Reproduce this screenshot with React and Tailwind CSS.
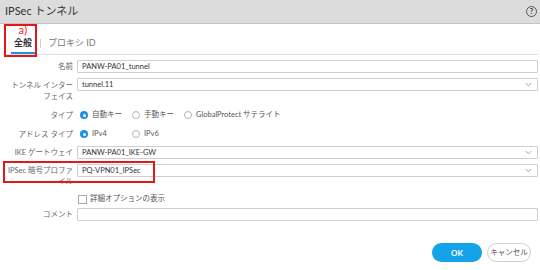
import React from "react";

const Chevron = () => (
  <svg width="7" height="5" viewBox="0 0 7 5" className="shrink-0">
    <path d="M0.8 1 L3.5 3.8 L6.2 1" fill="none" stroke="#9a9a9a" strokeWidth="0.9" />
  </svg>
);

const Radio = ({ on, label }) => (
  <div className="flex items-center w-[52px] shrink-0">
    {on ? (
      <span className="w-[8px] h-[8px] rounded-full bg-[#1e8fe6] flex items-center justify-center shrink-0">
        <span className="w-[3px] h-[3px] rounded-full bg-white" />
      </span>
    ) : (
      <span className="w-[8px] h-[8px] rounded-full border border-[#b5b5b5] bg-white shrink-0" />
    )}
    <span className="ml-[4px] whitespace-nowrap">{label}</span>
  </div>
);

const Label = ({ children }) => (
  <div className="w-[73px] shrink-0 text-right text-[7.5px] leading-[11px] text-[#666]">{children}</div>
);

const Input = ({ value, select }) => (
  <div className="ml-[4px] mr-[2px] flex-1 h-[13px] border border-[#cfcfcf] rounded-[1px] pl-[4px] pr-[5px] flex items-center justify-between text-[7.5px] text-[#333] bg-white">
    <span>{value}</span>
    {select ? <Chevron /> : null}
  </div>
);

export default function App() {
  return (
    <div className="w-[540px] h-[270px] bg-white relative overflow-hidden font-[Lato,'Noto_Sans_CJK_JP',sans-serif]">
      {/* header */}
      <div className="h-[24px] bg-[#dcdcdc] border-b border-[#c4c4c4] flex items-center justify-between pl-[5px] pr-[3px]">
        <span className="text-[11px] text-[#333]">IPSec トンネル</span>
        <span className="w-[11px] h-[11px] rounded-full border border-[#555] text-[7.5px] font-bold text-[#333] flex items-center justify-center leading-none">?</span>
      </div>

      {/* tabs */}
      <div className="h-[31px] mx-[2px] border-b border-[#dedede] flex items-end">
        <div className="ml-[9px] w-[24px] flex flex-col items-center border-b-2 border-[#1e8fe6] pb-[4px]">
          <span className="text-[11px] leading-[10px] tracking-[0.5px] text-[#ee2222]">a)</span>
          <span className="mt-[3px] text-[9px] leading-[10px] font-bold text-[#333]">全般</span>
        </div>
        <div className="ml-[5px] mb-[6px] w-px h-[9px] bg-[#d0d0d0]" />
        <span className="ml-[7px] mb-[6px] text-[9px] leading-[10px] text-[#777]">プロキシ ID</span>
      </div>

      {/* form */}
      <div className="flex flex-col">
        <div className="mt-[5px] flex items-center">
          <Label>名前</Label>
          <Input value="PANW-PA01_tunnel" />
        </div>
        <div className="mt-[5px] flex items-start">
          <div className="pt-[2px]">
            <Label>
              トンネル インター
              <br />
              フェイス
            </Label>
          </div>
          <Input value="tunnel.11" select />
        </div>
        <div className="mt-[7px] h-[12px] flex items-center">
          <Label>タイプ</Label>
          <div className="ml-[7px] flex items-center text-[7.5px] text-[#555]">
            <Radio on label="自動キー" />
            <Radio label="手動キー" />
            <Radio label="GlobalProtect サテライト" />
          </div>
        </div>
        <div className="mt-[7px] h-[12px] flex items-center">
          <Label>アドレス タイプ</Label>
          <div className="ml-[7px] flex items-center text-[7.5px] text-[#555]">
            <Radio on label="IPv4" />
            <Radio label="IPv6" />
          </div>
        </div>
        <div className="mt-[6px] flex items-center">
          <Label>IKE ゲートウェイ</Label>
          <Input value="PANW-PA01_IKE-GW" select />
        </div>
        <div className="mt-[5px] flex items-start">
          <div className="pt-[1px]">
            <Label>
              IPSec 暗号プロファ
              <br />
              イル
            </Label>
          </div>
          <Input value="PQ-VPN01_IPSec" select />
        </div>
        <div className="mt-[7px] h-[10px] flex items-center">
          <div className="w-[73px] shrink-0" />
          <span className="ml-[5px] w-[9px] h-[9px] border border-[#a8a8a8] bg-white shrink-0" />
          <span className="ml-[3px] text-[7.5px] text-[#555]">詳細オプションの表示</span>
        </div>
        <div className="mt-[4px] flex items-center">
          <Label>コメント</Label>
          <Input value="" />
        </div>
        <div className="mt-[22px] flex justify-end pr-[9px]">
          <div className="w-[50px] h-[19px] rounded-full bg-[#14a3e9] text-white text-[8px] font-bold flex items-center justify-center">OK</div>
          <div className="ml-[5px] w-[44px] h-[19px] rounded-full border border-[#cfcfcf] text-[#555] text-[7.5px] flex items-center justify-center">キャンセル</div>
        </div>
      </div>

      {/* annotation boxes */}
      <div className="absolute left-[4px] top-[24px] w-[33px] h-[33px] border-2 border-[#e01a1a] pointer-events-none" />
      <div className="absolute left-[3px] top-[161px] w-[152px] h-[22px] border-2 border-[#e01a1a] pointer-events-none" />
    </div>
  );
}
